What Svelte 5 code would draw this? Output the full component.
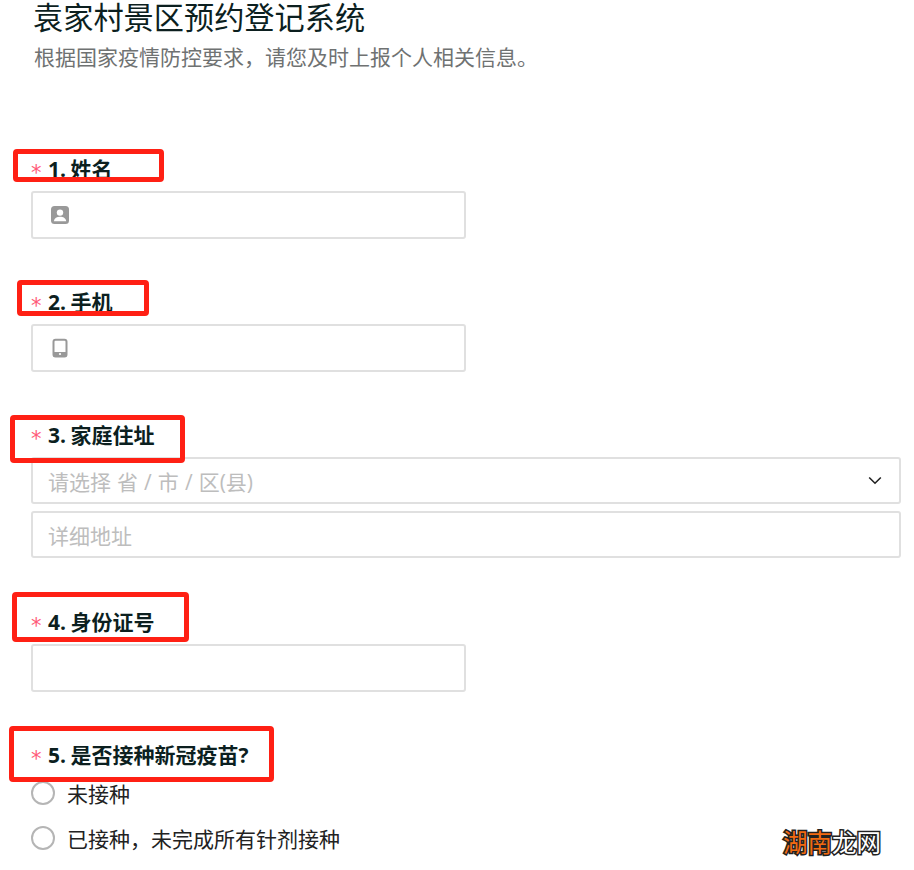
<script>
    const marks = [
        { left: 13, top: 149, width: 151, height: 33 },
        { left: 17, top: 280, width: 132, height: 36 },
        { left: 10, top: 415, width: 175, height: 48 },
        { left: 12, top: 592, width: 177, height: 50 },
        { left: 9, top: 726, width: 265, height: 56 }
    ];
</script>

<div class="page">
    <header class="head">
        <h1>袁家村景区预约登记系统</h1>
        <p>根据国家疫情防控要求，请您及时上报个人相关信息。</p>
    </header>

    <form class="form">
        <div class="field first">
            <div class="label"><span class="star">*</span>1. 姓名</div>
            <div class="input half">
                <svg class="icon" viewBox="0 0 20 20" width="20" height="20">
                    <rect x="1" y="1" width="18" height="18" rx="3.5" fill="#999"/>
                    <circle cx="10" cy="7.6" r="3.2" fill="#fff"/>
                    <path d="M3.8 16.2c.4-3 3-4.4 6.2-4.4s5.800 1.400 6.200 4.400z" fill="#fff"/>
                </svg>
            </div>
        </div>

        <div class="field second">
            <div class="label"><span class="star">*</span>2. 手机</div>
            <div class="input half">
                <svg class="icon" viewBox="0 0 20 20" width="20" height="20">
                    <rect x="3.500" y="1.800" width="13" height="16.800" rx="2" fill="none" stroke="#999" stroke-width="2"/>
                    <rect x="3.500" y="14" width="13" height="4.600" fill="#999"/>
                    <circle cx="10" cy="16" r="1.100" fill="#fff"/>
                </svg>
            </div>
        </div>

        <div class="field third">
            <div class="label"><span class="star">*</span>3. 家庭住址</div>
            <div class="input full select">
                <span class="placeholder spaced">请选择 省 / 市 / 区(县)</span>
                <svg class="chevron" viewBox="0 0 14 9" width="14" height="9">
                    <path d="M1.200 1.500 7 7.200l5.800-5.700" fill="none" stroke="#222" stroke-width="1.600"/>
                </svg>
            </div>
            <div class="input full detail">
                <span class="placeholder">详细地址</span>
            </div>
        </div>

        <div class="field fourth">
            <div class="label"><span class="star">*</span>4. 身份证号</div>
            <div class="input half"></div>
        </div>

        <div class="field fifth">
            <div class="label"><span class="star">*</span>5. 是否接种新冠疫苗?</div>
            <div class="radio"><span class="circle"></span>未接种</div>
            <div class="radio"><span class="circle"></span>已接种，未完成所有针剂接种</div>
        </div>
    </form>

    {#each marks as m}
        <div class="mark" style="left:{m.left}px;top:{m.top}px;width:{m.width}px;height:{m.height}px"></div>
    {/each}

    <div class="watermark"><span class="orange">湖南</span>龙网</div>
</div>

<style>
    :global(body) {
        margin: 0;
        background: #fff;
    }

    .page {
        position: relative;
        width: 914px;
        height: 870px;
        font-family: "Open Sans", "Noto Sans CJK SC", sans-serif;
        color: #0c1f1f;
    }

    .head {
        padding-left: 33px;
    }

    .head h1 {
        margin: 0;
        font-size: 30.200px;
        font-weight: 400;
        line-height: 36px;
    }

    .head p {
        margin: 0;
        padding: 7px 0 0 1px;
        font-size: 21px;
        line-height: 28px;
        color: #6f7272;
    }

    .form {
        padding-left: 31px;
    }

    .field.first {
        margin-top: 82px;
    }

    .field.second {
        margin-top: 47px;
    }

    .field.third {
        margin-top: 47px;
    }

    .field.fourth {
        margin-top: 48px;
    }

    .field.fifth {
        margin-top: 47px;
    }

    .label {
        display: flex;
        align-items: center;
        height: 30px;
        margin-bottom: 8px;
        font-size: 21px;
        font-weight: 700;
        word-spacing: -1px;
    }

    .fifth .label {
        margin-bottom: 1px;
    }

    .star {
        width: 17px;
        padding-top: 9px;
        font-family: "DejaVu Sans", sans-serif;
        font-size: 21px;
        line-height: 24px;
        font-weight: 400;
        color: #ff5a78;
    }

    .input {
        display: flex;
        align-items: center;
        box-sizing: border-box;
        border: 2px solid #e0e0e0;
        border-radius: 3px;
        background: #fff;
    }

    .half {
        width: 435px;
        height: 48px;
    }

    .full {
        width: 870px;
        height: 47px;
        padding: 0 16px 0 15px;
    }

    .select {
        justify-content: space-between;
    }

    .detail {
        margin-top: 7px;
    }

    .icon {
        margin-left: 17px;
    }

    .chevron {
        margin-right: 1px;
    }

    .placeholder {
        font-size: 21px;
        color: #bdbdbd;
    }

    .spaced {
        word-spacing: 0.6px;
    }

    .radio {
        display: flex;
        align-items: center;
        gap: 12px;
        height: 45px;
        font-size: 21px;
        color: #222;
    }

    .circle {
        box-sizing: border-box;
        width: 24px;
        height: 24px;
        border: 2px solid #b5b5b5;
        border-radius: 50%;
    }

    .mark {
        position: absolute;
        box-sizing: border-box;
        border: 5px solid #ff2014;
        border-radius: 4px;
    }

    .watermark {
        position: absolute;
        left: 783px;
        top: 826px;
        font-size: 24.500px;
        line-height: 34px;
        color: #fff;
        -webkit-text-stroke: 3px #222;
        paint-order: stroke fill;
    }

    .orange {
        color: #f26a10;
    }
</style>
